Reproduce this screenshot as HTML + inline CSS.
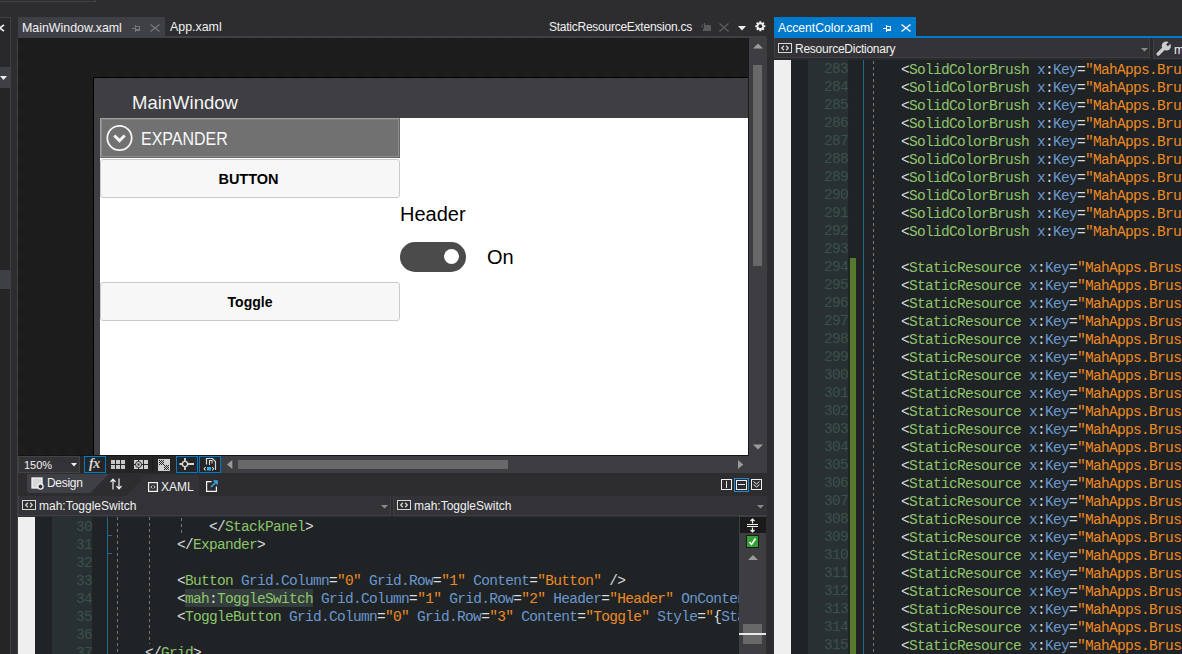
<!DOCTYPE html>
<html><head><meta charset="utf-8">
<style>
html,body{margin:0;padding:0;background:#2d2d30;}
#root{position:relative;width:1182px;height:654px;overflow:hidden;background:#2d2d30;font-family:"Liberation Sans",sans-serif;}
.a{position:absolute;}
.ui{font-family:"Liberation Sans",sans-serif;font-size:12px;line-height:14px;color:#f1f1f1;white-space:nowrap;}
.code{font-family:"Liberation Mono",monospace;font-size:14.5px;letter-spacing:-0.7px;white-space:pre;line-height:18px;}
.ln{font-family:"Liberation Mono",monospace;font-size:14.5px;letter-spacing:-0.7px;white-space:pre;line-height:18px;color:#3a5049;text-align:right;}
.clip{position:absolute;overflow:hidden;}
svg{position:absolute;display:block;}
</style></head>
<body><div id="root">

<!-- top toolbar remnant -->
<div class="a" style="left:0;top:1px;width:95px;height:1px;background:#434346"></div>
<div class="a" style="left:95px;top:0;width:1px;height:2px;background:#434346"></div>

<!-- left side panel -->
<div class="a" style="left:0;top:17px;width:10px;height:637px;background:#252526"></div>
<div class="a" style="left:0;top:17px;width:10px;height:50px;background:#29292b"></div>
<div class="a" style="left:0;top:17px;width:10px;height:1px;background:#3f3f46"></div>
<div class="a" style="left:10px;top:17px;width:1px;height:637px;background:#3f3f46"></div>
<div class="a" style="left:0;top:67px;width:10px;height:21px;background:#3f3f46"></div>
<div class="a" style="left:0;top:270px;width:10px;height:19px;background:#3f3f46"></div>
<div class="a" style="left:17px;top:38px;width:1px;height:616px;background:#3f3f46"></div>
<svg style="left:-5px;top:24px" width="10" height="8"><path d="M0.8 0.8L9 7.2M9 0.8L0.8 7.2" stroke="#ececec" stroke-width="1.7"/></svg>
<svg style="left:0;top:76px" width="7" height="4"><path d="M0 0H7L3.5 4Z" fill="#f0f0f0"/></svg>

<!-- document tabs (left group) -->
<div class="a" style="left:18px;top:17px;width:147px;height:20px;background:#3f3f46"></div>
<div class="a" style="left:18px;top:36px;width:748px;height:2px;background:#3f3f46"></div>
<div id="t1" class="a ui" style="left:22px;top:21px;font-size:12.4px">MainWindow.xaml</div>
<svg style="left:131px;top:24px" width="10" height="8"><path d="M1 4H4V5H1Z M4 1H5V8H4Z M5 2H9V3H5Z M8 2H9V7H8Z M5 5H9V7H5Z" fill="#77777a"/></svg>
<svg style="left:150px;top:24px" width="10" height="8"><path d="M0.5 0.5L9.5 7.5M9.5 0.5L0.5 7.5" stroke="#77777a" stroke-width="1.3"/></svg>
<div id="t2" class="a ui" style="left:170px;top:20px;font-size:12.4px">App.xaml</div>
<div id="t3" class="a ui" style="left:549px;top:20px;font-size:12px;letter-spacing:-0.25px">StaticResourceExtension.cs</div>
<svg style="left:701px;top:23px" width="11" height="9"><path d="M3 2H10V8H1.5L3 4.5Z" fill="#5a5a5c"/><path d="M0.6 0.6L2.2 2.2M3.5 0V2M0 3.5H2" stroke="#5a5a5c" stroke-width="1"/></svg>
<svg style="left:719px;top:23px" width="10" height="9"><path d="M0.5 0.5L9.5 8.5M9.5 0.5L0.5 8.5" stroke="#5e5e60" stroke-width="1.3"/></svg>
<svg style="left:738px;top:26px" width="8" height="5"><path d="M0 0H8L4 4.5Z" fill="#f0f0f0"/></svg>
<svg style="left:754.5px;top:21px" width="11" height="11" viewBox="0 0 11 11"><g fill="#f0f0f0"><circle cx="5.3" cy="5.2" r="3.7"/><rect x="4.3" y="0.2" width="2" height="10" /><rect x="0.3" y="4.2" width="10" height="2"/><rect x="4.3" y="0.2" width="2" height="10" transform="rotate(45 5.3 5.2)"/><rect x="4.3" y="0.2" width="2" height="10" transform="rotate(-45 5.3 5.2)"/></g><circle cx="5.3" cy="5.2" r="1.9" fill="#2d2d30"/></svg>

<!-- designer surface -->
<div class="a" style="left:18px;top:38px;width:730px;height:417px;background:repeating-conic-gradient(#1d1d1e 0 25%,#1b1b1b 0 50%) 0 0/16px 16px"></div>
<div class="a" style="left:93px;top:77px;width:655px;height:378px;background:#000"></div>
<div class="a" style="left:94px;top:78px;width:654px;height:377px;background:#3e3e43"></div>
<div class="a" style="left:100px;top:118px;width:648px;height:337px;background:#ffffff"></div>
<div id="mw" class="a" style="left:132px;top:92px;font-size:18.5px;line-height:21px;color:#f4f4f4;white-space:nowrap">MainWindow</div>

<!-- expander -->
<div class="a" style="left:100px;top:118px;width:298px;height:38px;background:#717171;border:1px solid #a0a0a0;border-right-color:#686868;border-bottom-color:#686868"></div>
<div class="a" style="left:101px;top:119px;width:296px;height:36px;border:1px solid #8c8c8c;border-top-color:#7e7e7e"></div>
<svg style="left:106px;top:125px" width="27" height="27"><circle cx="13.5" cy="13" r="12.2" fill="none" stroke="#f4f4f4" stroke-width="1.8"/><path d="M8.3 10.5L13.5 15.6L18.7 10.5" fill="none" stroke="#f4f4f4" stroke-width="3"/></svg>
<div id="exp" class="a" style="left:141px;top:128px;font-size:18.7px;line-height:21px;color:#f8f8f8;white-space:nowrap;transform:scaleX(0.855);transform-origin:0 0">EXPANDER</div>
<!-- button -->
<div class="a" style="left:100px;top:159px;width:298px;height:37px;background:#f7f7f7;border:1px solid #cacaca;border-radius:3px"></div>
<div id="btn" class="a" style="left:100px;top:171px;width:300px;text-align:center;font-size:14.5px;line-height:16px;font-weight:bold;color:#000;text-indent:-3px">BUTTON</div>
<!-- header / toggle -->
<div id="hdr" class="a" style="left:400px;top:203px;font-size:20px;line-height:23px;color:#000;white-space:nowrap">Header</div>
<div class="a" style="left:400px;top:242px;width:66px;height:30px;border-radius:15px;background:#4b4b4b"></div>
<div class="a" style="left:444px;top:249px;width:15px;height:15px;border-radius:50%;background:#fff"></div>
<div id="on" class="a" style="left:487px;top:246px;font-size:20px;line-height:23px;color:#000;white-space:nowrap">On</div>
<!-- toggle button -->
<div class="a" style="left:100px;top:282px;width:298px;height:37px;background:#f7f7f7;border:1px solid #cacaca;border-radius:3px"></div>
<div id="tgl" class="a" style="left:100px;top:294px;width:300px;text-align:center;font-size:14px;line-height:16px;font-weight:bold;color:#000">Toggle</div>

<!-- designer scrollbar -->
<div class="a" style="left:748px;top:38px;width:1px;height:417px;background:#1a1a1a"></div>
<div class="a" style="left:749px;top:38px;width:18px;height:417px;background:#3e3e42"></div>
<svg style="left:753px;top:43px" width="10" height="6"><path d="M0 5.5H10L5 0.5Z" fill="#9a9a9a"/></svg>
<div class="a" style="left:753px;top:65px;width:9px;height:201px;background:#686868"></div>
<svg style="left:753px;top:444px" width="10" height="6"><path d="M0 0.5H10L5 5.5Z" fill="#9a9a9a"/></svg>

<!-- designer toolbar -->
<div class="a" style="left:18px;top:455px;width:749px;height:18px;background:#252526"></div>
<div class="a" style="left:18px;top:456px;width:60px;height:15px;background:#333337;border:1px solid #434346"></div>
<div id="zoom" class="a ui" style="left:24px;top:458px;font-size:11px">150%</div>
<svg style="left:71px;top:463px" width="6" height="4"><path d="M0 0H6L3 3.5Z" fill="#f0f0f0"/></svg>
<div class="a" style="left:84px;top:456px;width:20px;height:15px;background:#252526;border:1px solid #007acc"></div>
<div class="a" style="left:89px;top:455px;font-family:'Liberation Serif',serif;font-style:italic;font-weight:bold;font-size:14px;line-height:17px;color:#d4d4d4;letter-spacing:-0.5px">fx</div>
<svg style="left:111px;top:460px" width="15" height="10"><g fill="#c8c8c8"><rect x="0" y="0" width="4" height="4"/><rect x="5" y="0" width="4" height="4"/><rect x="10" y="0" width="4" height="4"/><rect x="0" y="5" width="4" height="4"/><rect x="5" y="5" width="4" height="4"/><rect x="10" y="5" width="4" height="4"/></g></svg>
<div class="a" style="left:129px;top:456px;width:1px;height:17px;background:#1c1c1d"></div>
<svg style="left:134px;top:460px" width="15" height="10"><g fill="#d0d0d0"><rect x="0" y="0" width="9" height="9"/><rect x="10" y="0" width="4" height="4"/><rect x="10" y="5" width="4" height="4"/></g><g fill="#252526"><rect x="4" y="0" width="1" height="9"/><rect x="0" y="4" width="9" height="1"/></g><circle cx="4.5" cy="4.5" r="3" fill="#d0d0d0" stroke="#252526" stroke-width="1"/><rect x="3.5" y="3.5" width="2" height="2" fill="#252526"/></svg>
<div class="a" style="left:152px;top:456px;width:1px;height:17px;background:#1c1c1d"></div>
<svg style="left:158px;top:459px" width="12" height="12"><rect width="12" height="12" fill="#cfcfcf"/><g fill="#252526"><rect x="1" y="1" width="1" height="1"/><rect x="1" y="3" width="1" height="1"/><rect x="1" y="5" width="1" height="1"/><rect x="2" y="2" width="1" height="1"/><rect x="2" y="4" width="1" height="1"/><rect x="3" y="1" width="1" height="1"/><rect x="3" y="3" width="1" height="1"/><rect x="3" y="5" width="1" height="1"/><rect x="4" y="2" width="1" height="1"/><rect x="4" y="4" width="1" height="1"/><rect x="5" y="1" width="1" height="1"/><rect x="5" y="3" width="1" height="1"/><rect x="5" y="5" width="1" height="1"/><rect x="6" y="6" width="1" height="1"/><rect x="6" y="8" width="1" height="1"/><rect x="6" y="10" width="1" height="1"/><rect x="7" y="7" width="1" height="1"/><rect x="7" y="9" width="1" height="1"/><rect x="8" y="6" width="1" height="1"/><rect x="8" y="8" width="1" height="1"/><rect x="8" y="10" width="1" height="1"/><rect x="9" y="7" width="1" height="1"/><rect x="9" y="9" width="1" height="1"/><rect x="10" y="6" width="1" height="1"/><rect x="10" y="8" width="1" height="1"/><rect x="10" y="10" width="1" height="1"/></g></svg>
<div class="a" style="left:176px;top:456px;width:20px;height:15px;background:#252526;border:1px solid #007acc"></div>
<svg style="left:179px;top:457px" width="16" height="14"><g stroke="#d8d8d8" fill="none"><circle cx="6" cy="7" r="2.6" stroke-width="1.4"/><path d="M6 1V4.3M6 9.7V13M0.5 7H3.3M8.7 7H15" stroke-width="1.8"/></g></svg>
<div class="a" style="left:199px;top:456px;width:20px;height:15px;background:#252526;border:1px solid #007acc"></div>
<svg style="left:203px;top:457px" width="14" height="14"><path d="M3.5 7.5V1.5H9.5L12.5 4.5V13" fill="none" stroke="#d8d8d8" stroke-width="1.2"/><path d="M6.5 8V3.5H9V6.5" fill="none" stroke="#d8d8d8" stroke-width="1.1"/><rect x="4" y="10" width="4" height="3.5" fill="#3aaaf0"/><path d="M2.5 10L1.2 11.8L2.5 13.5M9.3 10L10.6 11.8L9.3 13.5" stroke="#d8d8d8" stroke-width="1.1" fill="none"/></svg>
<div class="a" style="left:221px;top:456px;width:527px;height:17px;background:#3e3e42"></div>
<svg style="left:227px;top:460px" width="6" height="9"><path d="M5.3 0V9L0 4.5Z" fill="#9a9a9a"/></svg>
<div class="a" style="left:238px;top:460px;width:270px;height:9px;background:#686868"></div>
<svg style="left:738px;top:460px" width="6" height="9"><path d="M0 0V9L5.3 4.5Z" fill="#9a9a9a"/></svg>
<div class="a" style="left:748px;top:455px;width:19px;height:18px;background:#3e3e42"></div>
<div class="a" style="left:18px;top:455px;width:731px;height:1px;background:#141414"></div>

<!-- design/xaml row -->
<div class="a" style="left:18px;top:473px;width:749px;height:23px;background:#2d2d30"></div>
<svg style="left:27px;top:474px" width="83" height="19"><path d="M0 0H82L63 19H3Q0 19 0 16Z" fill="#3f3f46"/></svg>
<svg style="left:31px;top:477px" width="13" height="13"><rect x="1" y="1" width="10" height="10" fill="#d8d8d8" stroke="#f4f4f4" stroke-width="1.3"/><circle cx="9.5" cy="9.5" r="2.6" fill="#333" stroke="#f0f0f0" stroke-width="1.3"/></svg>
<div id="dsg" class="a ui" style="left:47px;top:476px;font-size:12px;letter-spacing:-0.3px">Design</div>
<svg style="left:110px;top:478px" width="12" height="12"><g stroke="#f0f0f0" stroke-width="1.2" fill="none"><path d="M3 1.5V11.5M0.5 4L3 1.2L5.5 4M9 0.5V10.5M6.5 8L9 10.8L11.5 8"/></g></svg>
<svg style="left:126px;top:475px" width="74" height="21"><path d="M0 21L20 0H70Q73 0 73 3V21Z" fill="#333337"/></svg>
<svg style="left:148px;top:482px" width="10" height="10"><rect x="0.6" y="0.6" width="8.8" height="8.8" fill="none" stroke="#f4f4f4" stroke-width="1.2"/><path d="M4.2 3.5L3 5L4.2 6.5M5.8 3.5L7 5L5.8 6.5" stroke="#e0e0e0" stroke-width="0.9" fill="none"/></svg>
<div id="xaml" class="a ui" style="left:161px;top:480px;font-size:12px">XAML</div>
<svg style="left:206px;top:480px" width="12" height="12"><path d="M5.5 1.6H0.6V11.4H10.4V6.5" fill="none" stroke="#f4f4f4" stroke-width="1.2"/><path d="M5 7L10.5 1.5M7.5 1H11V4.5" fill="none" stroke="#3aa4ea" stroke-width="1.6"/></svg>
<svg style="left:720px;top:478px" width="44" height="14"><rect x="1.5" y="1.5" width="10" height="10" fill="none" stroke="#f0f0f0"/><path d="M6.5 3V10" stroke="#f0f0f0"/><rect x="14.5" y="0.5" width="14" height="13" fill="none" stroke="#1e8ad6"/><rect x="16.5" y="2.5" width="10" height="9" fill="none" stroke="#f0f0f0"/><path d="M18 6.5H25" stroke="#f0f0f0"/><rect x="31.5" y="1.5" width="10" height="10" fill="none" stroke="#f0f0f0"/><path d="M33.5 3.5L36.5 6L39.5 3.5M33.5 6.5L36.5 9L39.5 6.5" stroke="#f0f0f0" fill="none"/></svg>

<!-- bottom navbar -->
<div class="a" style="left:18px;top:496px;width:749px;height:21px;background:#2d2d30"></div>
<div class="a" style="left:18px;top:496px;width:371px;height:19px;background:#333337;border:1px solid #3f3f46;border-top:none"></div>
<div class="a" style="left:393px;top:496px;width:374px;height:19px;background:#333337;border:1px solid #3f3f46;border-top:none;border-right:none"></div>
<svg style="left:22px;top:500px" width="15" height="11"><rect x="0.5" y="0.5" width="13" height="9" fill="#2d2d30" stroke="#d8d8d8" stroke-width="1"/><path d="M5.8 2.8L3.8 5L5.8 7.2M8.2 2.8L10.2 5L8.2 7.2" stroke="#d0d0d0" stroke-width="1.4" fill="none"/></svg>
<div id="nav1" class="a ui" style="left:39px;top:499px;font-size:12px">mah:ToggleSwitch</div>
<svg style="left:381px;top:505px" width="7" height="4"><path d="M0 0H7L3.5 3.5Z" fill="#8a8a8a"/></svg>
<svg style="left:397px;top:500px" width="15" height="11"><rect x="0.5" y="0.5" width="13" height="9" fill="#2d2d30" stroke="#d8d8d8" stroke-width="1"/><path d="M5.8 2.8L3.8 5L5.8 7.2M8.2 2.8L10.2 5L8.2 7.2" stroke="#d0d0d0" stroke-width="1.4" fill="none"/></svg>
<div id="nav2" class="a ui" style="left:414px;top:499px;font-size:12px">mah:ToggleSwitch</div>
<svg style="left:757px;top:505px" width="7" height="4"><path d="M0 0H7L3.5 3.5Z" fill="#8a8a8a"/></svg>

<!-- bottom code editor -->
<div class="clip" style="left:18px;top:517px;width:721px;height:137px;background:#1f2326">
  <div class="a" style="left:0;top:0;width:17px;height:138px;background:#efefef"></div>
  <div class="a" style="left:34px;top:0;width:40px;height:138px;background:#283033"></div>
  <div class="a" style="left:89px;top:0;width:1px;height:138px;background:#1f6a88"></div>
  <div class="a" style="left:90px;top:18px;width:4px;height:1px;background:#1f6a88"></div>
  <div class="a" style="left:90px;top:36px;width:4px;height:1px;background:#1f6a88"></div>
  <div class="a" style="left:99px;top:0;width:1px;height:138px;background:repeating-linear-gradient(#7a7a7a 0 3px,transparent 3px 6px)"></div>
  <div class="a" style="left:131px;top:0;width:1px;height:127px;background:repeating-linear-gradient(#7a7a7a 0 3px,transparent 3px 6px)"></div>
  <div class="a" style="left:163px;top:1px;width:1px;height:18px;background:repeating-linear-gradient(#7a7a7a 0 3px,transparent 3px 6px)"></div>
  <div class="a" style="left:167px;top:72px;width:128px;height:18px;background:#343d3e"></div>
<div class="ln a" style="top:1px;left:34px;width:40px">30</div>
<div class="code a" style="top:1px;left:95px"><span style="color:#dcdcdc">            &lt;/</span><span style="color:#8ec46a">StackPanel</span><span style="color:#dcdcdc">&gt;</span></div>
<div class="ln a" style="top:19px;left:34px;width:40px">31</div>
<div class="code a" style="top:19px;left:95px"><span style="color:#dcdcdc">        &lt;/</span><span style="color:#8ec46a">Expander</span><span style="color:#dcdcdc">&gt;</span></div>
<div class="ln a" style="top:37px;left:34px;width:40px">32</div>
<div class="ln a" style="top:55px;left:34px;width:40px">33</div>
<div class="code a" style="top:55px;left:95px"><span style="color:#dcdcdc">        &lt;</span><span style="color:#8ec46a">Button</span><span style="color:#6b97cc"> Grid.Column</span><span style="color:#dcdcdc">=</span><span style="color:#ee8a22">"0"</span><span style="color:#6b97cc"> Grid.Row</span><span style="color:#dcdcdc">=</span><span style="color:#ee8a22">"1"</span><span style="color:#6b97cc"> Content</span><span style="color:#dcdcdc">=</span><span style="color:#ee8a22">"Button"</span><span style="color:#dcdcdc"> /&gt;</span></div>
<div class="ln a" style="top:73px;left:34px;width:40px">34</div>
<div class="code a" style="top:73px;left:95px"><span style="color:#dcdcdc">        &lt;</span><span style="color:#8ec46a">mah</span><span style="color:#dcdcdc">:</span><span style="color:#8ec46a">ToggleSwitch</span><span style="color:#6b97cc"> Grid.Column</span><span style="color:#dcdcdc">=</span><span style="color:#ee8a22">"1"</span><span style="color:#6b97cc"> Grid.Row</span><span style="color:#dcdcdc">=</span><span style="color:#ee8a22">"2"</span><span style="color:#6b97cc"> Header</span><span style="color:#dcdcdc">=</span><span style="color:#ee8a22">"Header"</span><span style="color:#6b97cc"> OnContent</span><span style="color:#dcdcdc">=</span><span style="color:#ee8a22">"On"</span></div>
<div class="ln a" style="top:91px;left:34px;width:40px">35</div>
<div class="code a" style="top:91px;left:95px"><span style="color:#dcdcdc">        &lt;</span><span style="color:#8ec46a">ToggleButton</span><span style="color:#6b97cc"> Grid.Column</span><span style="color:#dcdcdc">=</span><span style="color:#ee8a22">"0"</span><span style="color:#6b97cc"> Grid.Row</span><span style="color:#dcdcdc">=</span><span style="color:#ee8a22">"3"</span><span style="color:#6b97cc"> Content</span><span style="color:#dcdcdc">=</span><span style="color:#ee8a22">"Toggle"</span><span style="color:#6b97cc"> Style</span><span style="color:#dcdcdc">=</span><span style="color:#ee8a22">"</span><span style="color:#dcdcdc">{</span><span style="color:#6b97cc">StaticResource</span></div>
<div class="ln a" style="top:109px;left:34px;width:40px">36</div>
<div class="ln a" style="top:127px;left:34px;width:40px">37</div>
<div class="code a" style="top:127px;left:95px"><span style="color:#dcdcdc">    &lt;/</span><span style="color:#8ec46a">Grid</span><span style="color:#dcdcdc">&gt;</span></div>

</div>

<!-- bottom editor scrollbar -->
<div class="a" style="left:739px;top:516px;width:27px;height:138px;background:#3e3e42"></div>
<div class="a" style="left:740px;top:517px;width:26px;height:16px;background:#1a1a1a"></div>
<svg style="left:747px;top:518px" width="12" height="15"><g stroke="#f0f0f0" fill="none" stroke-width="1.2"><path d="M0 6.5H11M0 8.5H11M5.5 1V5.5M5.5 9.5V14M3.5 3L5.5 1L7.5 3M3.5 12L5.5 14L7.5 12"/></g></svg>
<div class="a" style="left:746px;top:535px;width:11px;height:11px;background:#33a033;border:1px solid #1c1c1c"></div>
<svg style="left:746px;top:535px" width="13" height="13"><path d="M3.5 7L5.5 9.5L9.5 3.5" stroke="#fff" stroke-width="1.6" fill="none"/></svg>
<svg style="left:748px;top:555px" width="10" height="5"><path d="M0 5H10L5 0Z" fill="#9a9a9a"/></svg>
<div class="a" style="left:743px;top:624px;width:19px;height:20px;background:#686868"></div>
<div class="a" style="left:739px;top:633px;width:27px;height:2px;background:#e8e8e8"></div>

<!-- separator -->
<div class="a" style="left:767px;top:38px;width:7px;height:616px;background:#2d2d30"></div>

<!-- right document well -->
<div class="a" style="left:774px;top:17px;width:142px;height:21px;background:#007acc"></div>
<div class="a" style="left:774px;top:36px;width:408px;height:2px;background:#007acc"></div>
<div id="t4" class="a ui" style="left:778px;top:21px;color:#fff;font-size:12.2px">AccentColor.xaml</div>
<svg style="left:882px;top:24px" width="10" height="9"><path d="M1 4H4V5H1Z M4 1H5V8H4Z M5 2H9V3H5Z M8 2H9V7H8Z M5 5H9V7H5Z" fill="#f4f4f4"/></svg>
<svg style="left:901px;top:24px" width="10" height="8"><path d="M0.5 0.5L9.5 7.5M9.5 0.5L0.5 7.5" stroke="#f4f4f4" stroke-width="1.4"/></svg>

<!-- right navbar -->
<div class="a" style="left:774px;top:38px;width:408px;height:22px;background:#2a2a2c"></div>
<div class="a" style="left:774px;top:38px;width:374px;height:19px;background:#333337;border:1px solid #3f3f46;border-top:none"></div>
<div class="a" style="left:1153px;top:38px;width:29px;height:20px;background:#333337;border:1px solid #3f3f46;border-top:none;border-right:none"></div>
<svg style="left:778px;top:43px" width="15" height="11"><rect x="0.5" y="0.5" width="13" height="9" fill="#2d2d30" stroke="#d8d8d8" stroke-width="1"/><path d="M5.8 2.8L3.8 5L5.8 7.2M8.2 2.8L10.2 5L8.2 7.2" stroke="#d0d0d0" stroke-width="1.4" fill="none"/></svg>
<div id="nav3" class="a ui" style="left:795px;top:42px;font-size:12px;letter-spacing:-0.25px">ResourceDictionary</div>
<svg style="left:1141px;top:48px" width="7" height="4"><path d="M0 0H7L3.5 3.5Z" fill="#8a8a8a"/></svg>
<svg style="left:1156px;top:40px" width="16" height="16"><path d="M2.2 14L8.5 7.7" stroke="#cdcdcd" stroke-width="3.4" stroke-linecap="round"/><circle cx="10.3" cy="6" r="4.6" fill="#cdcdcd"/><path d="M11 5.3L15 1.3" stroke="#333337" stroke-width="2.6"/></svg>
<div id="nav4" class="a ui" style="left:1174px;top:43px;font-size:12px">mah</div>

<!-- right code editor -->
<div class="clip" style="left:774px;top:60px;width:408px;height:594px;background:#1f2326">
  <div class="a" style="left:0;top:0;width:17px;height:595px;background:#efefef"></div>
  <div class="a" style="left:34px;top:0;width:40px;height:595px;background:#283033"></div>
  <div class="a" style="left:76px;top:198px;width:6px;height:396px;background:#57792d"></div>
  <div class="a" style="left:89px;top:0;width:1px;height:595px;background:#1f6a88"></div>
  <div class="a" style="left:99px;top:1px;width:1px;height:595px;background:repeating-linear-gradient(#7a7a7a 0 3px,transparent 3px 6px)"></div>
<div class="ln a" style="top:0px;left:34px;width:40px">283</div>
<div class="code a" style="top:1px;left:95px"><span style="color:#dcdcdc">    &lt;</span><span style="color:#8ec46a">SolidColorBrush</span><span style="color:#6b97cc"> x</span><span style="color:#dcdcdc">:</span><span style="color:#6b97cc">Key</span><span style="color:#dcdcdc">=</span><span style="color:#ee8a22">"MahApps.Brushes</span></div>
<div class="ln a" style="top:18px;left:34px;width:40px">284</div>
<div class="code a" style="top:19px;left:95px"><span style="color:#dcdcdc">    &lt;</span><span style="color:#8ec46a">SolidColorBrush</span><span style="color:#6b97cc"> x</span><span style="color:#dcdcdc">:</span><span style="color:#6b97cc">Key</span><span style="color:#dcdcdc">=</span><span style="color:#ee8a22">"MahApps.Brushes</span></div>
<div class="ln a" style="top:36px;left:34px;width:40px">285</div>
<div class="code a" style="top:37px;left:95px"><span style="color:#dcdcdc">    &lt;</span><span style="color:#8ec46a">SolidColorBrush</span><span style="color:#6b97cc"> x</span><span style="color:#dcdcdc">:</span><span style="color:#6b97cc">Key</span><span style="color:#dcdcdc">=</span><span style="color:#ee8a22">"MahApps.Brushes</span></div>
<div class="ln a" style="top:54px;left:34px;width:40px">286</div>
<div class="code a" style="top:55px;left:95px"><span style="color:#dcdcdc">    &lt;</span><span style="color:#8ec46a">SolidColorBrush</span><span style="color:#6b97cc"> x</span><span style="color:#dcdcdc">:</span><span style="color:#6b97cc">Key</span><span style="color:#dcdcdc">=</span><span style="color:#ee8a22">"MahApps.Brushes</span></div>
<div class="ln a" style="top:72px;left:34px;width:40px">287</div>
<div class="code a" style="top:73px;left:95px"><span style="color:#dcdcdc">    &lt;</span><span style="color:#8ec46a">SolidColorBrush</span><span style="color:#6b97cc"> x</span><span style="color:#dcdcdc">:</span><span style="color:#6b97cc">Key</span><span style="color:#dcdcdc">=</span><span style="color:#ee8a22">"MahApps.Brushes</span></div>
<div class="ln a" style="top:90px;left:34px;width:40px">288</div>
<div class="code a" style="top:91px;left:95px"><span style="color:#dcdcdc">    &lt;</span><span style="color:#8ec46a">SolidColorBrush</span><span style="color:#6b97cc"> x</span><span style="color:#dcdcdc">:</span><span style="color:#6b97cc">Key</span><span style="color:#dcdcdc">=</span><span style="color:#ee8a22">"MahApps.Brushes</span></div>
<div class="ln a" style="top:108px;left:34px;width:40px">289</div>
<div class="code a" style="top:109px;left:95px"><span style="color:#dcdcdc">    &lt;</span><span style="color:#8ec46a">SolidColorBrush</span><span style="color:#6b97cc"> x</span><span style="color:#dcdcdc">:</span><span style="color:#6b97cc">Key</span><span style="color:#dcdcdc">=</span><span style="color:#ee8a22">"MahApps.Brushes</span></div>
<div class="ln a" style="top:126px;left:34px;width:40px">290</div>
<div class="code a" style="top:127px;left:95px"><span style="color:#dcdcdc">    &lt;</span><span style="color:#8ec46a">SolidColorBrush</span><span style="color:#6b97cc"> x</span><span style="color:#dcdcdc">:</span><span style="color:#6b97cc">Key</span><span style="color:#dcdcdc">=</span><span style="color:#ee8a22">"MahApps.Brushes</span></div>
<div class="ln a" style="top:144px;left:34px;width:40px">291</div>
<div class="code a" style="top:145px;left:95px"><span style="color:#dcdcdc">    &lt;</span><span style="color:#8ec46a">SolidColorBrush</span><span style="color:#6b97cc"> x</span><span style="color:#dcdcdc">:</span><span style="color:#6b97cc">Key</span><span style="color:#dcdcdc">=</span><span style="color:#ee8a22">"MahApps.Brushes</span></div>
<div class="ln a" style="top:162px;left:34px;width:40px">292</div>
<div class="code a" style="top:163px;left:95px"><span style="color:#dcdcdc">    &lt;</span><span style="color:#8ec46a">SolidColorBrush</span><span style="color:#6b97cc"> x</span><span style="color:#dcdcdc">:</span><span style="color:#6b97cc">Key</span><span style="color:#dcdcdc">=</span><span style="color:#ee8a22">"MahApps.Brushes</span></div>
<div class="ln a" style="top:180px;left:34px;width:40px">293</div>
<div class="ln a" style="top:198px;left:34px;width:40px">294</div>
<div class="code a" style="top:199px;left:95px"><span style="color:#dcdcdc">    &lt;</span><span style="color:#8ec46a">StaticResource</span><span style="color:#6b97cc"> x</span><span style="color:#dcdcdc">:</span><span style="color:#6b97cc">Key</span><span style="color:#dcdcdc">=</span><span style="color:#ee8a22">"MahApps.Brushes</span></div>
<div class="ln a" style="top:216px;left:34px;width:40px">295</div>
<div class="code a" style="top:217px;left:95px"><span style="color:#dcdcdc">    &lt;</span><span style="color:#8ec46a">StaticResource</span><span style="color:#6b97cc"> x</span><span style="color:#dcdcdc">:</span><span style="color:#6b97cc">Key</span><span style="color:#dcdcdc">=</span><span style="color:#ee8a22">"MahApps.Brushes</span></div>
<div class="ln a" style="top:234px;left:34px;width:40px">296</div>
<div class="code a" style="top:235px;left:95px"><span style="color:#dcdcdc">    &lt;</span><span style="color:#8ec46a">StaticResource</span><span style="color:#6b97cc"> x</span><span style="color:#dcdcdc">:</span><span style="color:#6b97cc">Key</span><span style="color:#dcdcdc">=</span><span style="color:#ee8a22">"MahApps.Brushes</span></div>
<div class="ln a" style="top:252px;left:34px;width:40px">297</div>
<div class="code a" style="top:253px;left:95px"><span style="color:#dcdcdc">    &lt;</span><span style="color:#8ec46a">StaticResource</span><span style="color:#6b97cc"> x</span><span style="color:#dcdcdc">:</span><span style="color:#6b97cc">Key</span><span style="color:#dcdcdc">=</span><span style="color:#ee8a22">"MahApps.Brushes</span></div>
<div class="ln a" style="top:270px;left:34px;width:40px">298</div>
<div class="code a" style="top:271px;left:95px"><span style="color:#dcdcdc">    &lt;</span><span style="color:#8ec46a">StaticResource</span><span style="color:#6b97cc"> x</span><span style="color:#dcdcdc">:</span><span style="color:#6b97cc">Key</span><span style="color:#dcdcdc">=</span><span style="color:#ee8a22">"MahApps.Brushes</span></div>
<div class="ln a" style="top:288px;left:34px;width:40px">299</div>
<div class="code a" style="top:289px;left:95px"><span style="color:#dcdcdc">    &lt;</span><span style="color:#8ec46a">StaticResource</span><span style="color:#6b97cc"> x</span><span style="color:#dcdcdc">:</span><span style="color:#6b97cc">Key</span><span style="color:#dcdcdc">=</span><span style="color:#ee8a22">"MahApps.Brushes</span></div>
<div class="ln a" style="top:306px;left:34px;width:40px">300</div>
<div class="code a" style="top:307px;left:95px"><span style="color:#dcdcdc">    &lt;</span><span style="color:#8ec46a">StaticResource</span><span style="color:#6b97cc"> x</span><span style="color:#dcdcdc">:</span><span style="color:#6b97cc">Key</span><span style="color:#dcdcdc">=</span><span style="color:#ee8a22">"MahApps.Brushes</span></div>
<div class="ln a" style="top:324px;left:34px;width:40px">301</div>
<div class="code a" style="top:325px;left:95px"><span style="color:#dcdcdc">    &lt;</span><span style="color:#8ec46a">StaticResource</span><span style="color:#6b97cc"> x</span><span style="color:#dcdcdc">:</span><span style="color:#6b97cc">Key</span><span style="color:#dcdcdc">=</span><span style="color:#ee8a22">"MahApps.Brushes</span></div>
<div class="ln a" style="top:342px;left:34px;width:40px">302</div>
<div class="code a" style="top:343px;left:95px"><span style="color:#dcdcdc">    &lt;</span><span style="color:#8ec46a">StaticResource</span><span style="color:#6b97cc"> x</span><span style="color:#dcdcdc">:</span><span style="color:#6b97cc">Key</span><span style="color:#dcdcdc">=</span><span style="color:#ee8a22">"MahApps.Brushes</span></div>
<div class="ln a" style="top:360px;left:34px;width:40px">303</div>
<div class="code a" style="top:361px;left:95px"><span style="color:#dcdcdc">    &lt;</span><span style="color:#8ec46a">StaticResource</span><span style="color:#6b97cc"> x</span><span style="color:#dcdcdc">:</span><span style="color:#6b97cc">Key</span><span style="color:#dcdcdc">=</span><span style="color:#ee8a22">"MahApps.Brushes</span></div>
<div class="ln a" style="top:378px;left:34px;width:40px">304</div>
<div class="code a" style="top:379px;left:95px"><span style="color:#dcdcdc">    &lt;</span><span style="color:#8ec46a">StaticResource</span><span style="color:#6b97cc"> x</span><span style="color:#dcdcdc">:</span><span style="color:#6b97cc">Key</span><span style="color:#dcdcdc">=</span><span style="color:#ee8a22">"MahApps.Brushes</span></div>
<div class="ln a" style="top:396px;left:34px;width:40px">305</div>
<div class="code a" style="top:397px;left:95px"><span style="color:#dcdcdc">    &lt;</span><span style="color:#8ec46a">StaticResource</span><span style="color:#6b97cc"> x</span><span style="color:#dcdcdc">:</span><span style="color:#6b97cc">Key</span><span style="color:#dcdcdc">=</span><span style="color:#ee8a22">"MahApps.Brushes</span></div>
<div class="ln a" style="top:414px;left:34px;width:40px">306</div>
<div class="code a" style="top:415px;left:95px"><span style="color:#dcdcdc">    &lt;</span><span style="color:#8ec46a">StaticResource</span><span style="color:#6b97cc"> x</span><span style="color:#dcdcdc">:</span><span style="color:#6b97cc">Key</span><span style="color:#dcdcdc">=</span><span style="color:#ee8a22">"MahApps.Brushes</span></div>
<div class="ln a" style="top:432px;left:34px;width:40px">307</div>
<div class="code a" style="top:433px;left:95px"><span style="color:#dcdcdc">    &lt;</span><span style="color:#8ec46a">StaticResource</span><span style="color:#6b97cc"> x</span><span style="color:#dcdcdc">:</span><span style="color:#6b97cc">Key</span><span style="color:#dcdcdc">=</span><span style="color:#ee8a22">"MahApps.Brushes</span></div>
<div class="ln a" style="top:450px;left:34px;width:40px">308</div>
<div class="code a" style="top:451px;left:95px"><span style="color:#dcdcdc">    &lt;</span><span style="color:#8ec46a">StaticResource</span><span style="color:#6b97cc"> x</span><span style="color:#dcdcdc">:</span><span style="color:#6b97cc">Key</span><span style="color:#dcdcdc">=</span><span style="color:#ee8a22">"MahApps.Brushes</span></div>
<div class="ln a" style="top:468px;left:34px;width:40px">309</div>
<div class="code a" style="top:469px;left:95px"><span style="color:#dcdcdc">    &lt;</span><span style="color:#8ec46a">StaticResource</span><span style="color:#6b97cc"> x</span><span style="color:#dcdcdc">:</span><span style="color:#6b97cc">Key</span><span style="color:#dcdcdc">=</span><span style="color:#ee8a22">"MahApps.Brushes</span></div>
<div class="ln a" style="top:486px;left:34px;width:40px">310</div>
<div class="code a" style="top:487px;left:95px"><span style="color:#dcdcdc">    &lt;</span><span style="color:#8ec46a">StaticResource</span><span style="color:#6b97cc"> x</span><span style="color:#dcdcdc">:</span><span style="color:#6b97cc">Key</span><span style="color:#dcdcdc">=</span><span style="color:#ee8a22">"MahApps.Brushes</span></div>
<div class="ln a" style="top:504px;left:34px;width:40px">311</div>
<div class="code a" style="top:505px;left:95px"><span style="color:#dcdcdc">    &lt;</span><span style="color:#8ec46a">StaticResource</span><span style="color:#6b97cc"> x</span><span style="color:#dcdcdc">:</span><span style="color:#6b97cc">Key</span><span style="color:#dcdcdc">=</span><span style="color:#ee8a22">"MahApps.Brushes</span></div>
<div class="ln a" style="top:522px;left:34px;width:40px">312</div>
<div class="code a" style="top:523px;left:95px"><span style="color:#dcdcdc">    &lt;</span><span style="color:#8ec46a">StaticResource</span><span style="color:#6b97cc"> x</span><span style="color:#dcdcdc">:</span><span style="color:#6b97cc">Key</span><span style="color:#dcdcdc">=</span><span style="color:#ee8a22">"MahApps.Brushes</span></div>
<div class="ln a" style="top:540px;left:34px;width:40px">313</div>
<div class="code a" style="top:541px;left:95px"><span style="color:#dcdcdc">    &lt;</span><span style="color:#8ec46a">StaticResource</span><span style="color:#6b97cc"> x</span><span style="color:#dcdcdc">:</span><span style="color:#6b97cc">Key</span><span style="color:#dcdcdc">=</span><span style="color:#ee8a22">"MahApps.Brushes</span></div>
<div class="ln a" style="top:558px;left:34px;width:40px">314</div>
<div class="code a" style="top:559px;left:95px"><span style="color:#dcdcdc">    &lt;</span><span style="color:#8ec46a">StaticResource</span><span style="color:#6b97cc"> x</span><span style="color:#dcdcdc">:</span><span style="color:#6b97cc">Key</span><span style="color:#dcdcdc">=</span><span style="color:#ee8a22">"MahApps.Brushes</span></div>
<div class="ln a" style="top:576px;left:34px;width:40px">315</div>
<div class="code a" style="top:577px;left:95px"><span style="color:#dcdcdc">    &lt;</span><span style="color:#8ec46a">StaticResource</span><span style="color:#6b97cc"> x</span><span style="color:#dcdcdc">:</span><span style="color:#6b97cc">Key</span><span style="color:#dcdcdc">=</span><span style="color:#ee8a22">"MahApps.Brushes</span></div>

</div>

</div></body></html>
